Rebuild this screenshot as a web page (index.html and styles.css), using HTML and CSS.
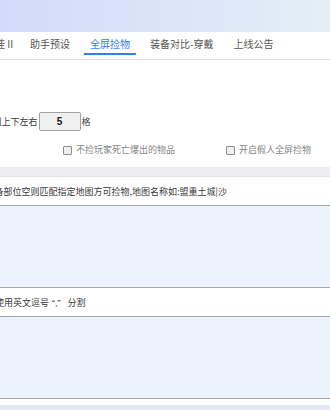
FILE: index.html
```html
<!DOCTYPE html>
<html lang="zh-CN">
<head>
  <meta charset="UTF-8" />
  <meta name="viewport" content="width=device-width, initial-scale=1.0" />
  <title>全屏捡物</title>
  <link rel="stylesheet" href="styles.css">
</head>
<body>
  <div class="app">
    <div class="banner"></div>

    <nav class="tabs">
      <a class="tab tab-first">挂 II</a>
      <a class="tab">助手预设</a>
      <a class="tab active">全屏捡物</a>
      <a class="tab">装备对比-穿戴</a>
      <a class="tab">上线公告</a>
    </nav>

    <section class="options">
      <div class="range-row">
        <span class="range-text">范围上下左右</span>
        <input class="range-input" type="text" value="5" />
        <span class="range-unit">格</span>
      </div>
      <div class="check-row">
        <label class="check"><input type="checkbox" disabled />不捡玩家死亡爆出的物品</label>
        <label class="check"><input type="checkbox" disabled />开启假人全屏捡物</label>
      </div>
    </section>

    <div class="divider"></div>

    <div class="field">
      <div class="field-label label-map">装备部位空则匹配指定地图方可捡物,地图名称如:盟重土城|沙</div>
      <textarea class="field-input"></textarea>
    </div>

    <div class="field">
      <div class="field-label label-sep">请使用英文逗号<span class="quote">“,”</span>分割</div>
      <textarea class="field-input"></textarea>
    </div>

    <div class="footer-bar"></div>
  </div>
</body>
</html>
```

FILE: styles.css
```css
body {
  margin: 0;
  background: #fff;
  font-family: "Noto Sans CJK SC", "Noto Sans", sans-serif;
  color: #333;
}
.app {
  width: 330px;
  height: 410px;
  overflow: hidden;
}
.banner {
  height: 32px;
  background: linear-gradient(to right, #d3dafb, #dde5f8 55%, #e3eff5);
}
.tabs {
  display: flex;
  height: 27px;
  margin-left: -15px;
  border-bottom: 1px solid #dcdee3;
  background: #fff;
  white-space: nowrap;
}
.tab {
  height: 21px;
  margin: 0 4px;
  padding: 3px 6px 0;
  box-sizing: border-box;
  height: 23px;
  font-size: 10px;
  line-height: 18px;
  color: #555;
  border-bottom: 2px solid transparent;
}
.tab-first {
  padding-right: 3px;
}
.tab.active {
  color: #2f7cf4;
  border-bottom-color: #2f80f5;
}
.options {
  padding: 52px 0 10px;
}
.range-row {
  display: flex;
  align-items: center;
  height: 19px;
  margin-left: -16.5px;
  font-size: 9px;
  white-space: nowrap;
  color: #3a3a3a;
}
.range-input {
  width: 42px;
  height: 19px;
  margin: 0 1px;
  padding: 0;
  box-sizing: border-box;
  border: 1px solid #a0a0a0;
  border-radius: 2px;
  background: #f0f0f0;
  text-align: center;
  font-family: "Liberation Sans", sans-serif;
  font-size: 10px;
  font-weight: bold;
  color: #222;
}
.check-row {
  display: flex;
  gap: 51px;
  margin-top: 12px;
  padding-left: 63px;
  height: 14px;
  white-space: nowrap;
}
.check {
  display: flex;
  align-items: center;
  gap: 4px;
  font-size: 9px;
  line-height: 14px;
  color: #858585;
}
.check input {
  appearance: none;
  width: 9px;
  height: 9px;
  margin: 0;
  box-sizing: border-box;
  border: 1px solid #8c8c8c;
  border-radius: 1px;
  background: #efefef;
}
.divider {
  height: 9px;
  background: #ededf0;
  border-bottom: 1px solid #e2e2e6;
}
.field {
  padding-top: 8px;
}
.field-label {
  font-size: 9px;
  line-height: 14px;
  margin-bottom: 6px;
  white-space: nowrap;
  color: #383838;
}
.label-map {
  margin-left: -14.5px;
}
.label-sep {
  margin-left: -14px;
}
.quote {
  margin: 0 7px 0 3px;
  font-family: "Liberation Sans", sans-serif;
}
.field-input {
  display: block;
  width: 360px;
  height: 83px;
  margin-left: -10px;
  box-sizing: border-box;
  border: 1px solid #a8a8a8;
  background: #edf3fd;
  resize: none;
}
.footer-bar {
  height: 10px;
  margin-top: 6px;
  background: #e6e9f5;
}
```
